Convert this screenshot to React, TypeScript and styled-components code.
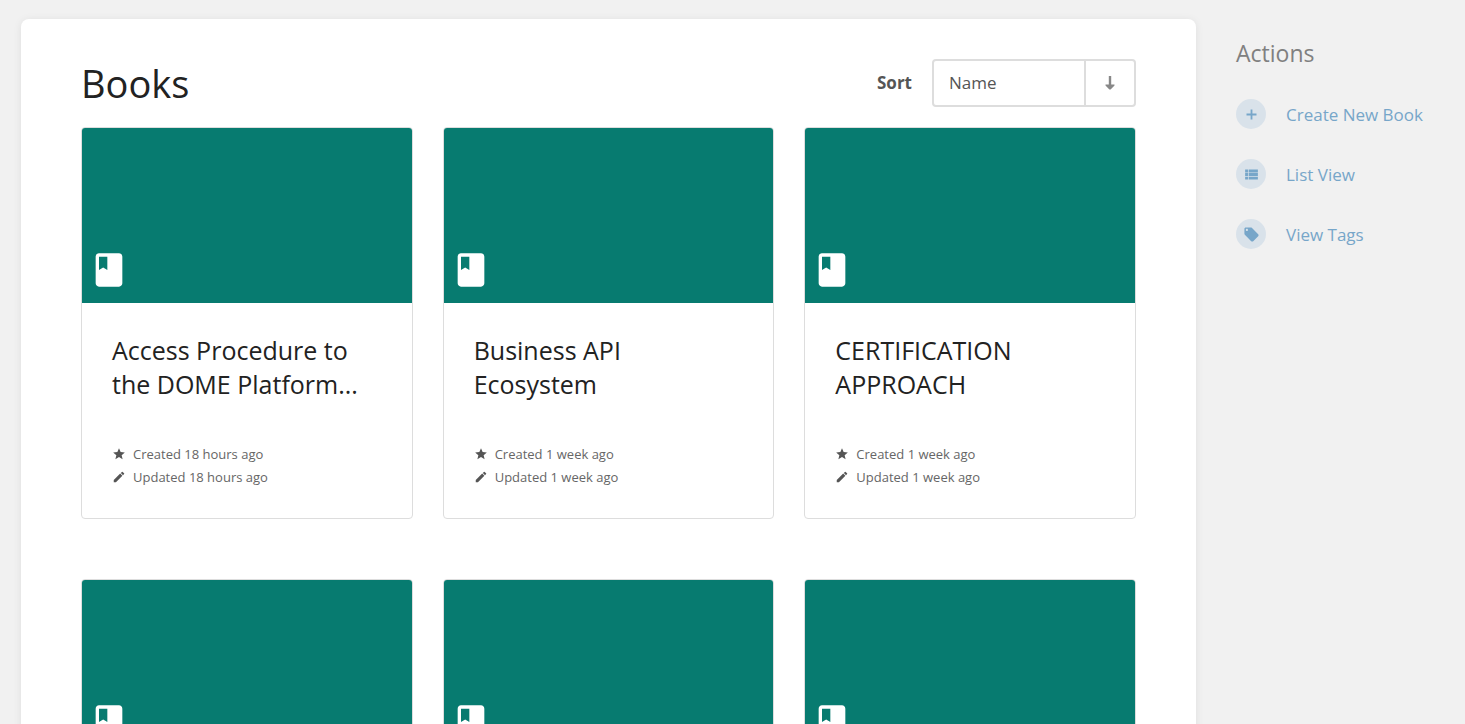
import React from "react";
import styled, { createGlobalStyle } from "styled-components";
import { MdBook, MdEdit, MdLocalOffer, MdStar, MdViewList } from "react-icons/md";

const GlobalStyle = createGlobalStyle`
  *, *::before, *::after { box-sizing: border-box; }
  body {
    margin: 0;
    background: #f1f1f1;
    color: #444;
    font-family: "Open Sans", "Noto Sans", sans-serif;
    font-size: 17px;
  }
`;

const Page = styled.div`
  display: grid;
  grid-template-columns: minmax(0, 1fr) 209px;
  gap: 40px;
  height: 100vh;
  padding: 19px 20px 0 21px;
  overflow-y: auto;
  scrollbar-width: none;
`;

const Main = styled.main`
  height: max-content;
  padding: 40px 60px 60px;
  background: #fff;
  border-radius: 8px;
  box-shadow: 0 1px 8px rgba(0, 0, 0, 0.08);
`;

const Toolbar = styled.header`
  display: flex;
  align-items: center;
  justify-content: space-between;
  height: 48px;
  margin-bottom: 20px;
`;

const Title = styled.h1`
  margin: 0;
  color: #222;
  font-size: 38px;
  font-weight: 400;
  line-height: 48px;
`;

const SortForm = styled.form`
  display: flex;
  align-items: center;
  gap: 20px;
`;

const SortLabel = styled.label`
  padding-bottom: 2px;
  color: #555;
  font-weight: 700;
`;

const SortControl = styled.div`
  display: flex;
  height: 48px;
  border: 2px solid #ddd;
  border-radius: 4px;
`;

const SortSelect = styled.select`
  width: 150px;
  padding: 0 15px 2px;
  appearance: none;
  background: transparent;
  border: 0;
  color: #555;
  font: inherit;
`;

const DirectionButton = styled.button`
  display: flex;
  align-items: center;
  justify-content: center;
  width: 50px;
  padding: 0;
  background: transparent;
  border: 0;
  border-left: 2px solid #ddd;
  color: #888;
`;

const BookGrid = styled.div`
  display: grid;
  grid-template-columns: repeat(3, minmax(0, 1fr));
  gap: 60px 30px;
`;

const Card = styled.a`
  display: flex;
  flex-direction: column;
  overflow: hidden;
  border: 1px solid #ddd;
  border-radius: 4px;
  color: #222;
  text-decoration: none;
`;

const Cover = styled.div`
  display: flex;
  align-items: flex-end;
  height: 175px;
  padding: 0 0 13px 7px;
  background: #077b70;
  color: #fff;
`;

const CardBody = styled.div`
  min-height: 138px;
  padding: 30px 30px 0;
`;

const CardTitle = styled.h2`
  max-width: 250px;
  margin: 0;
  font-size: 25px;
  font-weight: 400;
  line-height: 34px;
`;

const CardFooter = styled.div`
  display: flex;
  flex-direction: column;
  padding: 2px 30px 29px;
  color: #666;
  font-size: 13px;
  line-height: 23px;
`;

const Meta = styled.span`
  display: flex;
  align-items: center;
  gap: 7px;

  svg {
    margin-bottom: 2px;
    color: #555;
  }
`;

const Sidebar = styled.aside`
  padding-top: 18px;
`;

const SidebarTitle = styled.h2`
  margin: 0 0 30px;
  color: #808080;
  font-size: 23px;
  font-weight: 400;
  line-height: 32px;
`;

const ActionList = styled.nav`
  display: flex;
  flex-direction: column;
  gap: 30px;
`;

const Action = styled.a`
  display: flex;
  align-items: center;
  gap: 20px;
  height: 30px;
  color: #77a6c9;
  text-decoration: none;
  white-space: nowrap;
`;

const Badge = styled.span`
  display: flex;
  align-items: center;
  justify-content: center;
  width: 30px;
  height: 30px;
  border-radius: 50%;
  background: #d9e2ea;
`;

function PlusIcon({ size }: { size: number }) {
  return (
    <svg width={size} height={size} viewBox="0 0 17 17" fill="currentColor">
      <path d="M7.600 3.500h1.800v4.100h4.100v1.800H9.400v4.100H7.600V9.400H3.500V7.600h4.100z" />
    </svg>
  );
}

const books = [
  { title: "Access Procedure to the DOME Platform...", age: "18 hours ago" },
  { title: "Business API Ecosystem", age: "1 week ago" },
  { title: "CERTIFICATION APPROACH", age: "1 week ago" },
  { title: "", age: "" },
  { title: "", age: "" },
  { title: "", age: "" },
];

const actions = [
  { label: "Create New Book", Icon: PlusIcon },
  { label: "List View", Icon: MdViewList },
  { label: "View Tags", Icon: MdLocalOffer },
];

function BookCard({ title, age }: { title: string; age: string }) {
  return (
    <Card href="#">
      <Cover>
        <MdBook size={40} />
      </Cover>
      <CardBody>{title && <CardTitle>{title}</CardTitle>}</CardBody>
      {age && (
        <CardFooter>
          <Meta><MdStar size={14} />Created {age}</Meta>
          <Meta><MdEdit size={14} />Updated {age}</Meta>
        </CardFooter>
      )}
    </Card>
  );
}

export default function App() {
  return (
    <>
      <GlobalStyle />
      <Page>
        <Main>
          <Toolbar>
            <Title>Books</Title>
            <SortForm>
              <SortLabel htmlFor="sort">Sort</SortLabel>
              <SortControl>
                <SortSelect id="sort" defaultValue="name">
                  <option value="name">Name</option>
                </SortSelect>
                <DirectionButton type="button" aria-label="Sort ascending">
                  <svg width="10" height="14" viewBox="0 0 10 14" fill="currentColor">
                    <path d="M3.800 0h2.400v8.600h3.300v1L5.600 13.500H4.400L.5 9.600v-1h3.300z" />
                  </svg>
                </DirectionButton>
              </SortControl>
            </SortForm>
          </Toolbar>
          <BookGrid>
            {books.map((book, i) => (
              <BookCard key={i} {...book} />
            ))}
          </BookGrid>
        </Main>
        <Sidebar>
          <SidebarTitle>Actions</SidebarTitle>
          <ActionList>
            {actions.map(({ label, Icon }) => (
              <Action href="#" key={label}>
                <Badge><Icon size={17} /></Badge>
                {label}
              </Action>
            ))}
          </ActionList>
        </Sidebar>
      </Page>
    </>
  );
}
